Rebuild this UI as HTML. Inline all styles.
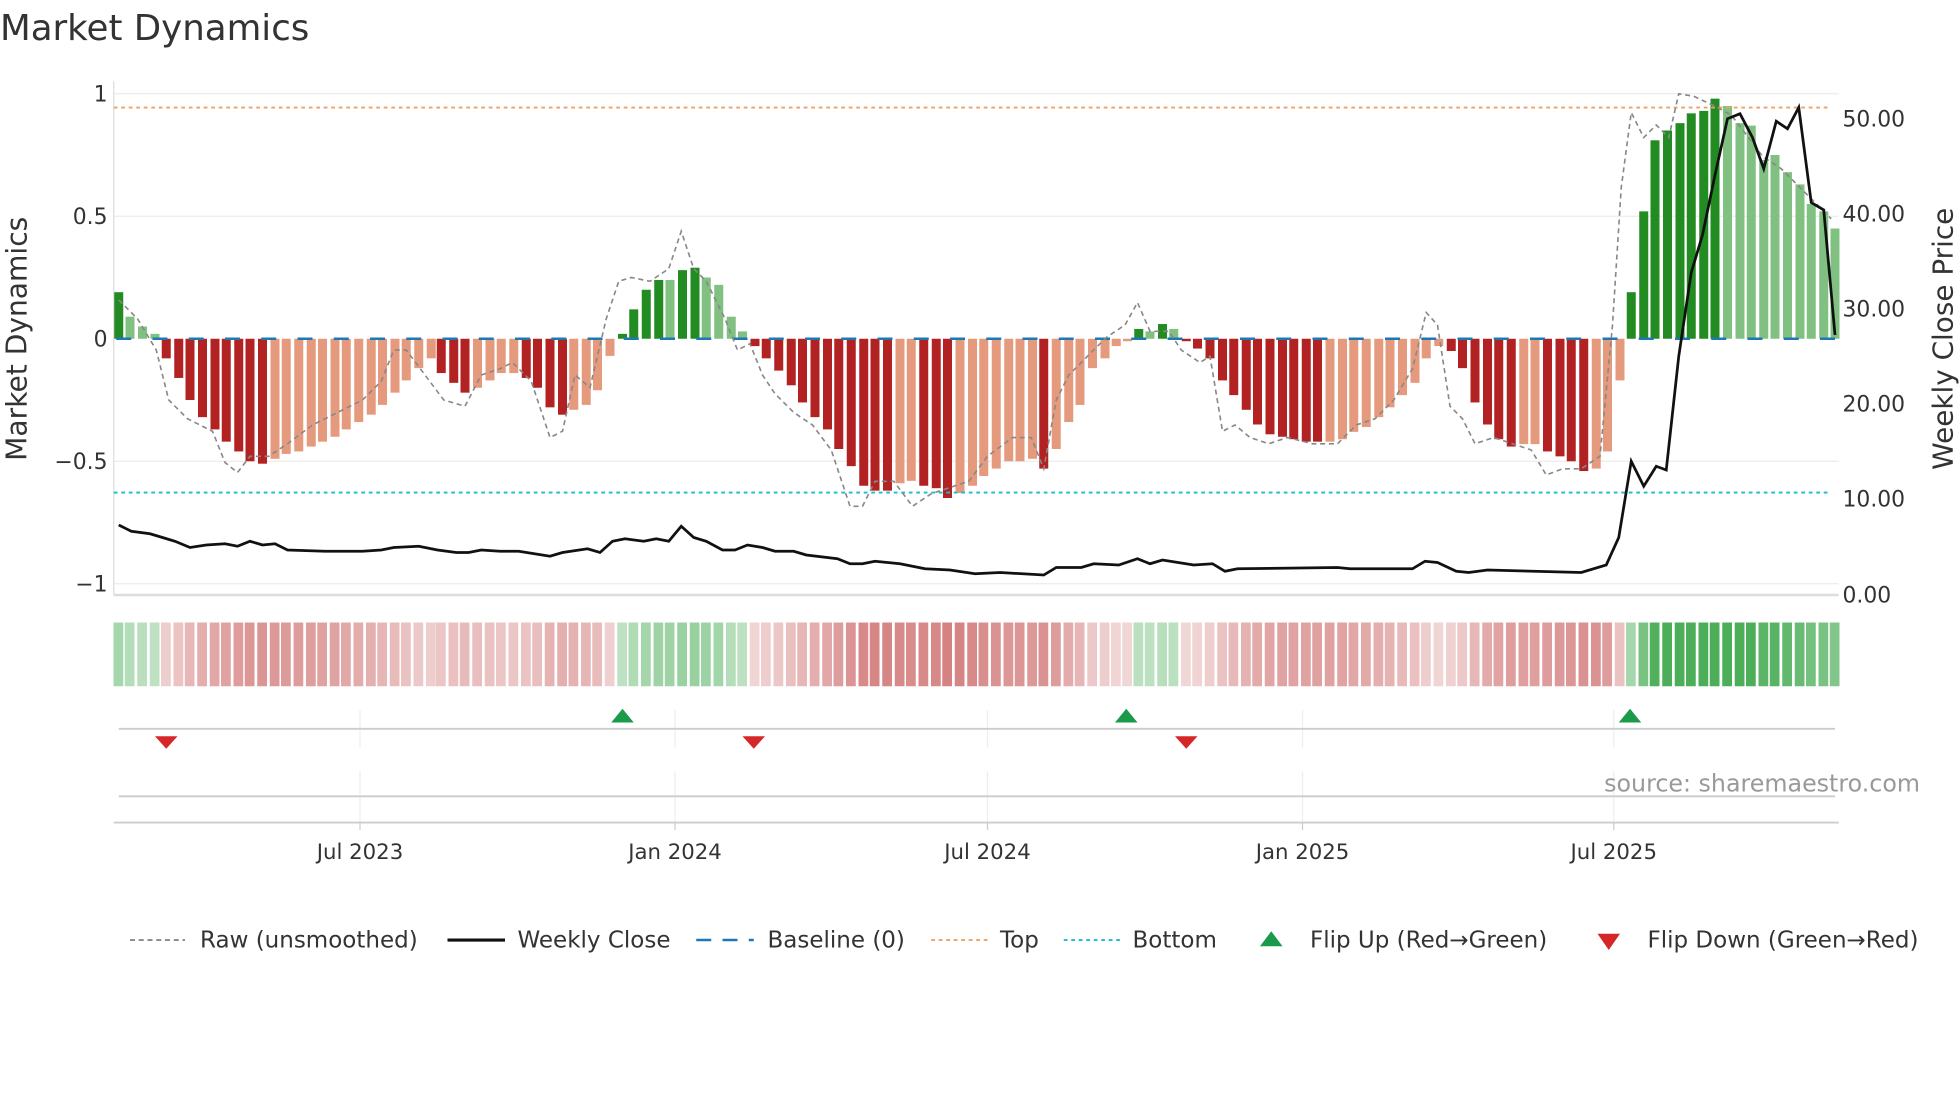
<!DOCTYPE html>
<html><head><meta charset="utf-8"><style>
html,body{margin:0;padding:0;background:#fff;}
svg{display:block;font-family:"DejaVu Sans","Liberation Sans",sans-serif;}
</style></head><body>
<svg id="s" width="1960" height="1102" viewBox="0 0 1568 881.6" xmlns="http://www.w3.org/2000/svg">
<rect width="1568" height="881.6" fill="#fff"/>
<text x="0" y="32" font-size="28.5" fill="#333">Market Dynamics</text>
<g stroke="#ececec" stroke-width="1">
<line x1="91" y1="75" x2="1471" y2="75"/><line x1="91" y1="173" x2="1471" y2="173"/>
<line x1="91" y1="369" x2="1471" y2="369"/><line x1="91" y1="467" x2="1471" y2="467"/>
</g>
<line x1="91" y1="65" x2="91" y2="476" stroke="#ddd"/>
<line x1="91" y1="476" x2="1471" y2="476" stroke="#ddd" stroke-width="2"/>
<g font-size="17.5" fill="#333" text-anchor="end">
<text x="86" y="81">1</text><text x="86" y="179">0.5</text><text x="86" y="277">0</text><text x="86" y="375">−0.5</text><text x="86" y="473">−1</text>
</g>
<g font-size="17.5" fill="#333">
<text x="1474" y="101">50.00</text><text x="1474" y="177">40.00</text><text x="1474" y="253">30.00</text><text x="1474" y="329">20.00</text><text x="1474" y="405">10.00</text><text x="1474" y="482">0.00</text>
</g>
<text transform="translate(21,271) rotate(-90)" font-size="22.5" fill="#333" text-anchor="middle">Market Dynamics</text>
<text transform="translate(1562,271) rotate(-90)" font-size="22.3" fill="#333" text-anchor="middle">Weekly Close Price</text>
<g id="bars"></g>
<line x1="91" y1="86" x2="1465" y2="86" stroke="#f0a060" stroke-width="1.5" stroke-dasharray="3,3"/>
<line x1="91" y1="394" x2="1465" y2="394" stroke="#17becf" stroke-width="1.5" stroke-dasharray="3,3"/>
<line x1="93" y1="271" x2="1468" y2="271" stroke="#1f77b4" stroke-width="2" stroke-dasharray="12,17"/>
<polyline id="raw" fill="none" stroke="#888" stroke-width="1.3" stroke-dasharray="4,3"/>
<polyline id="close" fill="none" stroke="#111" stroke-width="2.2"/>
<g id="heat"></g>
<g stroke="#eee"><line x1="288" y1="568" x2="288" y2="598"/><line x1="540" y1="568" x2="540" y2="598"/><line x1="790" y1="568" x2="790" y2="598"/><line x1="1042" y1="568" x2="1042" y2="598"/><line x1="1291" y1="568" x2="1291" y2="598"/>
<line x1="288" y1="617" x2="288" y2="657"/><line x1="540" y1="617" x2="540" y2="657"/><line x1="790" y1="617" x2="790" y2="657"/><line x1="1042" y1="617" x2="1042" y2="657"/><line x1="1291" y1="617" x2="1291" y2="657"/></g>
<line x1="95" y1="583" x2="1468" y2="583" stroke="#ccc" stroke-width="1.5"/>
<line x1="95" y1="637" x2="1468" y2="637" stroke="#ccc" stroke-width="1.5"/>
<line x1="91" y1="658" x2="1471" y2="658" stroke="#ccc" stroke-width="1.5"/>
<g stroke="#ccc"><line x1="288" y1="658" x2="288" y2="664"/><line x1="540" y1="658" x2="540" y2="664"/><line x1="790" y1="658" x2="790" y2="664"/><line x1="1042" y1="658" x2="1042" y2="664"/><line x1="1291" y1="658" x2="1291" y2="664"/></g>
<g fill="#1a9a4a"><polygon points="489,578 507,578 498,567"/><polygon points="892,578 910,578 901,567"/><polygon points="1295,578 1313,578 1304,567"/></g>
<g fill="#d62728"><polygon points="124,589 142,589 133,599"/><polygon points="594,589 612,589 603,599"/><polygon points="940,589 958,589 949,599"/></g>
<text x="1536" y="633" font-size="19" fill="#999" text-anchor="end">source: sharemaestro.com</text>
<g font-size="17" fill="#333" text-anchor="middle">
<text x="288" y="687">Jul 2023</text><text x="540" y="687">Jan 2024</text><text x="790" y="687">Jul 2024</text><text x="1042" y="687">Jan 2025</text><text x="1291" y="687">Jul 2025</text>
</g>
<g font-size="18.4" fill="#333">
<line x1="104" y1="752" x2="148" y2="752" stroke="#888" stroke-width="1.5" stroke-dasharray="4,3"/>
<text x="160" y="758">Raw (unsmoothed)</text>
<line x1="358" y1="752" x2="404" y2="752" stroke="#111" stroke-width="2.5"/>
<text x="414" y="758">Weekly Close</text>
<line x1="557" y1="752" x2="603" y2="752" stroke="#1f77b4" stroke-width="2" stroke-dasharray="12,9"/>
<text x="614" y="758">Baseline (0)</text>
<line x1="745" y1="752" x2="790" y2="752" stroke="#f0a060" stroke-width="1.5" stroke-dasharray="3,3"/>
<text x="800" y="758">Top</text>
<line x1="851" y1="752" x2="896" y2="752" stroke="#17becf" stroke-width="1.5" stroke-dasharray="3,3"/>
<text x="906" y="758">Bottom</text>
<polygon points="1008,757 1026,757 1017,745" fill="#1a9a4a"/>
<text x="1048" y="758">Flip Up (Red→Green)</text>
<polygon points="1278,747 1296,747 1287,760" fill="#d62728"/>
<text x="1318" y="758">Flip Down (Green→Red)</text>
</g>
</svg>
<script>
var B=[[95,.19,1],[104,.09,0],[114,.05,0],[124,.02,0],[133,-.08,1],[143,-.16,1],[152,-.25,1],[162,-.32,1],[172,-.37,1],[181,-.42,1],[191,-.46,1],[200,-.5,1],[210,-.51,1],
[220,-.49,0],[229,-.47,0],[239,-.46,0],[249,-.44,0],[258,-.42,0],[268,-.4,0],[277,-.37,0],[287,-.34,0],[297,-.31,0],[306,-.27,0],[316,-.22,0],[325,-.17,0],[335,-.12,0],[345,-.08,0],
[353,-.14,1],[363,-.18,1],[372,-.22,1],[382,-.2,0],[392,-.17,0],[401,-.14,0],[411,-.14,0],[421,-.16,1],[430,-.2,1],[440,-.28,1],[450,-.31,1],[459,-.29,0],[469,-.27,0],[478,-.21,0],[488,-.07,0],
[498,.02,1],[507,.12,1],[517,.2,1],[527,.24,1],[536,.24,0],[546,.28,1],[556,.29,1],[565,.25,0],[575,.22,0],[585,.09,0],[594,.03,0],
[604,-.03,1],[613,-.08,1],[623,-.13,1],[633,-.19,1],[642,-.26,1],[652,-.32,1],[662,-.37,1],[671,-.45,1],[681,-.52,1],[691,-.6,1],[700,-.62,1],[710,-.62,1],[720,-.59,0],[729,-.58,0],[739,-.6,1],[749,-.61,1],[758,-.65,1],
[768,-.63,0],[778,-.6,0],[787,-.56,0],[797,-.53,0],[807,-.5,0],[816,-.5,0],[826,-.49,0],[835,-.53,1],[845,-.45,0],[855,-.34,0],[864,-.27,0],[874,-.12,0],[884,-.08,0],[893,-.03,0],[902,-.01,0],
[911,.04,1],[920,.03,0],[930,.06,1],[939,.04,0],[949,-.01,1],[958,-.04,1],[968,-.08,1],[978,-.17,1],[987,-.23,1],[997,-.29,1],[1006,-.35,1],[1016,-.39,1],[1026,-.4,1],[1035,-.41,1],[1045,-.42,1],[1054,-.42,1],
[1064,-.42,0],[1074,-.41,0],[1083,-.38,0],[1093,-.36,0],[1103,-.32,0],[1112,-.28,0],[1122,-.23,0],[1132,-.18,0],[1141,-.08,0],[1151,-.03,0],[1161,-.05,1],[1170,-.12,1],[1180,-.26,1],[1190,-.35,1],[1199,-.41,1],[1209,-.44,1],
[1219,-.43,0],[1228,-.43,0],[1238,-.46,1],[1248,-.48,1],[1257,-.5,1],[1267,-.54,1],[1277,-.53,0],[1286,-.46,0],[1296,-.17,0],
[1305,.19,1],[1315,.52,1],[1324,.81,1],[1334,.85,1],[1344,.88,1],[1353,.92,1],[1363,.93,1],[1372,.98,1],[1382,.95,0],[1392,.88,0],[1401,.87,0],[1411,.73,0],[1420,.75,0],[1430,.68,0],[1440,.63,0],[1449,.55,0],[1459,.52,0],[1468,.45,0]];
var ns="http://www.w3.org/2000/svg",bars=document.getElementById('bars'),heat=document.getElementById('heat');
function r(g,x,y,w,h,f){var e=document.createElementNS(ns,'rect');e.setAttribute('x',x);e.setAttribute('y',y);e.setAttribute('width',w);e.setAttribute('height',h);e.setAttribute('fill',f);g.appendChild(e);}
B.forEach(function(b){var x=b[0],v=b[1],d=b[2];var h=Math.abs(v)*196;var y=v>0?271-h:271;
var c=v>0?(d?'#228b22':'#80c080'):(d?'#b22222':'#e59a7d');r(bars,x-3.6,y,7.2,Math.max(h,1.5),c);
var a=0.3+0.55*Math.min(1,Math.abs(v)*1.2);var col=v>0?'rgba(46,160,60,'+a+')':'rgba(190,60,60,'+(0.2+0.45*Math.min(1,Math.abs(v)*1.5))+')';
r(heat,x-4.2,498,7.8,51,col);});
document.getElementById('raw').setAttribute('points',"95,240 110,255 125,280 135,320 150,335 160,340 170,345 180,370 190,378 200,365 215,365 230,355 250,340 270,330 290,320 305,305 315,280 325,280 340,300 355,320 372,325 385,300 400,295 410,290 425,305 440,350 450,345 460,300 472,310 485,255 495,225 505,222 520,225 535,215 545,185 555,215 565,225 580,255 590,280 600,275 610,300 620,315 635,330 650,340 665,360 680,405 690,405 700,385 715,385 730,405 745,395 760,390 775,385 790,365 810,350 825,350 835,375 845,320 855,300 870,285 885,270 900,260 910,242 920,265 935,265 945,280 960,290 968,285 978,345 988,340 1000,350 1015,355 1030,350 1050,355 1070,355 1085,340 1100,335 1115,320 1130,295 1141,250 1150,260 1160,325 1170,335 1180,355 1195,350 1210,355 1225,360 1237,380 1250,375 1265,375 1280,365 1290,260 1297,150 1305,90 1315,110 1325,100 1335,110 1343,75 1355,77 1372,85 1385,92 1395,105 1410,125 1425,135 1440,150 1455,165 1465,175");
document.getElementById('close').setAttribute('points',"95,420 105,425 120,427 130,430 140,433 152,438 165,436 180,435 190,437 200,433 210,436 220,435 230,440 260,441 290,441 305,440 315,438 335,437 350,440 365,442 375,442 385,440 400,441 415,441 440,445 450,442 470,439 480,442 490,433 500,431 515,433 525,431 535,433 545,421 555,430 565,433 578,440 588,440 598,436 610,438 620,441 635,441 645,444 670,447 680,451 690,451 700,449 720,451 740,455 760,456 780,459 800,458 835,460 845,454 865,454 875,451 895,452 910,447 920,451 930,448 955,452 970,451 980,457 990,455 1070,454 1080,455 1130,455 1140,449 1150,450 1165,457 1175,458 1190,456 1265,458 1285,452 1295,430 1305,369 1315,389 1325,373 1333,376 1343,285 1353,218 1362,188 1372,140 1382,95 1392,91 1402,110 1411,135 1421,97 1430,103 1439,86 1449,162 1459,168 1468,268");
</script>
</body></html>
